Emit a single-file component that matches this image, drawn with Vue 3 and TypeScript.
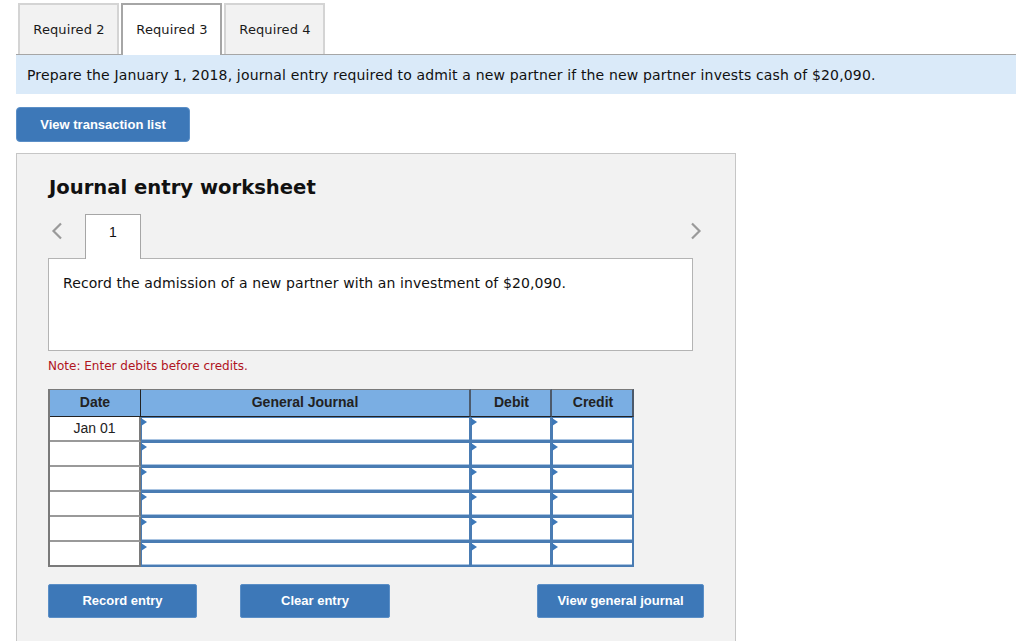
<script setup lang="ts">
const tabs = [
  { label: 'Required 2', active: false },
  { label: 'Required 3', active: true },
  { label: 'Required 4', active: false },
]

const rows = ['Jan 01', '', '', '', '', '']
</script>

<template>
  <div class="page">
    <div class="tabs">
      <div v-for="tab in tabs" :key="tab.label" class="tab" :class="{ active: tab.active }">{{ tab.label }}</div>
    </div>
    <div class="banner">Prepare the January 1, 2018, journal entry required to admit a new partner if the new partner invests cash of $20,090.</div>
    <button class="btn list-btn">View transaction list</button>

    <section class="panel">
      <h2>Journal entry worksheet</h2>
      <div class="nav">
        <svg class="chev" width="12" height="18" viewBox="0 0 12 18"><path d="M10 1.5 2.5 9l7.500 7.500" /></svg>
        <div class="step">1</div>
        <svg class="chev next" width="12" height="18" viewBox="0 0 12 18"><path d="M2 1.500 9.500 9 2 16.500" /></svg>
      </div>
      <div class="task">Record the admission of a new partner with an investment of $20,090.</div>
      <p class="note">Note: Enter debits before credits.</p>

      <div class="journal">
        <div class="cell head first">Date</div>
        <div class="cell head">General Journal</div>
        <div class="cell head amount">Debit</div>
        <div class="cell head amount">Credit</div>
        <template v-for="(date, i) in rows" :key="i">
          <div class="cell date" :class="{ end: i === rows.length - 1 }">{{ date }}</div>
          <div class="cell input"></div>
          <div class="cell input"></div>
          <div class="cell input"></div>
        </template>
      </div>

      <div class="actions">
        <button class="btn record">Record entry</button>
        <button class="btn clear">Clear entry</button>
        <button class="btn general">View general journal</button>
      </div>
    </section>
  </div>
</template>

<style scoped>
.page {
  height: 641px;
  overflow: hidden;
  padding: 3px 8px 0 16px;
  box-sizing: border-box;
  font-family: "DejaVu Sans", Verdana, sans-serif;
  color: #1a1a1a;
  background: #fff;
}
.tabs {
  display: flex;
  gap: 2px;
  padding-left: 2px;
  height: 51px;
  border-bottom: 1px solid #a6a6a6;
}
.tab {
  width: 101px;
  box-sizing: border-box;
  padding-left: 1px;
  border: 2px solid #d4d4d4;
  border-bottom: 0;
  background: #f2f2f2;
  font-size: 13px;
  letter-spacing: 0.1px;
  line-height: 50px;
  text-align: center;
}
.tab.active {
  background: #fff;
  border-color: #a6a6a6;
  margin-bottom: -1px;
}
.banner {
  height: 39px;
  background: #daeaf9;
  padding-left: 11px;
  font-size: 14px;
  letter-spacing: 0.15px;
  line-height: 40px;
  color: #111;
  white-space: nowrap;
}
.btn {
  display: block;
  flex-shrink: 0;
  padding: 0;
  border: 1px solid #5b8fc7;
  border-radius: 2px;
  background: #3d78b8;
  color: #fff;
  font-family: "Liberation Sans", Arial, sans-serif;
  font-size: 13px;
  font-weight: 700;
  text-align: center;
}
.list-btn {
  width: 174px;
  height: 35px;
  margin-top: 13px;
  border-radius: 4px;
}
.panel {
  width: 720px;
  height: 520px;
  box-sizing: border-box;
  margin-top: 11px;
  padding: 0 42px 0 31px;
  border: 1px solid #c6c6c6;
  background: #f2f2f2;
}
h2 {
  margin: 22px 0 0 1px;
  font-size: 19.600px;
  line-height: 24px;
  font-weight: 700;
  color: #111;
}
.nav {
  display: flex;
  align-items: flex-start;
  height: 45px;
  margin-top: 14px;
  margin-right: -9px;
  position: relative;
  z-index: 1;
}
.chev {
  margin: 8px 0 0 3px;
  fill: none;
  stroke: #9a9a9a;
  stroke-width: 2.200;
}
.chev.next {
  margin-left: auto;
}
.step {
  width: 56px;
  height: 45px;
  box-sizing: border-box;
  margin-left: 22px;
  border: 1px solid #a6a6a6;
  border-bottom: 0;
  background: #fff;
  font-family: "Liberation Sans", Arial, sans-serif;
  font-size: 14px;
  line-height: 34px;
  text-align: center;
  color: #111;
}
.task {
  height: 93px;
  box-sizing: border-box;
  margin-top: -1px;
  padding: 15px 14px;
  border: 1px solid #b4b4b4;
  background: #fff;
  font-size: 14px;
  letter-spacing: 0.1px;
  line-height: 18px;
  color: #111;
}
.note {
  margin: 7px 0 0;
  font-size: 12px;
  line-height: 16px;
  color: #b0141e;
}
.journal {
  display: grid;
  grid-template-columns: 91px 330px 81px 82px;
  grid-template-rows: 28px repeat(6, 25px);
  width: 586px;
  margin-top: 15px;
  box-sizing: border-box;
  border-left: 2px solid #7a7a7a;
  font-family: "Liberation Sans", Arial, sans-serif;
  font-size: 14px;
  color: #222;
}
.cell {
  position: relative;
  box-sizing: border-box;
  text-align: center;
}
.head {
  background: #7aaee3;
  border-top: 1px solid #7a7a7a;
  border-right: 2px solid #4d5a6b;
  border-bottom: 1px solid #222;
  font-weight: 700;
  line-height: 25px;
}
.head.first {
  border-right: 1px solid #222;
}
.head.amount {
  padding-left: 2px;
}
.date {
  background: #fff;
  border-right: 2px solid #7a7a7a;
  border-bottom: 2px solid #999;
  line-height: 22px;
}
.date.end {
  border-bottom-color: #7a7a7a;
}
.input {
  background: #fff;
  border: 2px solid #4a7cb3;
  border-top-width: 1px;
  border-left-width: 1px;
  box-shadow: inset 0 -1px #a9c4e2;
}
.input::before {
  content: "";
  position: absolute;
  top: 0;
  left: -1px;
  border-left: 6px solid #3d78b8;
  border-top: 4px solid transparent;
  border-bottom: 4px solid transparent;
}
.actions {
  display: flex;
  margin-top: 17px;
}
.actions .btn {
  height: 34px;
  padding-bottom: 1px;
}
.record {
  width: 149px;
}
.clear {
  width: 150px;
  margin-left: 43px;
}
.general {
  width: 167px;
  margin-left: 147px;
}
</style>

<style>
html,
body {
  margin: 0;
  overflow: hidden;
}
</style>
